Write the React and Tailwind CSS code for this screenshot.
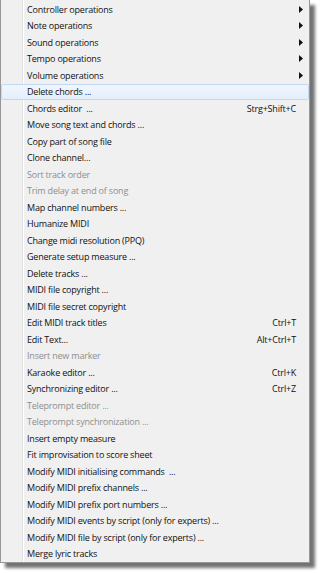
import React from 'react'

const items = [
  { label: 'Controller operations', sub: true },
  { label: 'Note operations', sub: true },
  { label: 'Sound operations', sub: true },
  { label: 'Tempo operations', sub: true },
  { label: 'Volume operations', sub: true },
  { label: 'Delete chords ...', active: true },
  { label: 'Chords editor  ...', key: 'Strg+Shift+C' },
  { label: 'Move song text and chords ...' },
  { label: 'Copy part of song file' },
  { label: 'Clone channel...' },
  { label: 'Sort track order', off: true },
  { label: 'Trim delay at end of song', off: true },
  { label: 'Map channel numbers ...' },
  { label: 'Humanize MIDI' },
  { label: 'Change midi resolution (PPQ)' },
  { label: 'Generate setup measure ...' },
  { label: 'Delete tracks ...' },
  { label: 'MIDI file copyright ...' },
  { label: 'MIDI file secret copyright' },
  { label: 'Edit MIDI track titles', key: 'Ctrl+T' },
  { label: 'Edit Text...', key: 'Alt+Ctrl+T' },
  { label: 'Insert new marker', off: true },
  { label: 'Karaoke editor ...', key: 'Ctrl+K' },
  { label: 'Synchronizing editor ...', key: 'Ctrl+Z' },
  { label: 'Teleprompt editor ...', off: true },
  { label: 'Teleprompt synchronization ...', off: true },
  { label: 'Insert empty measure' },
  { label: 'Fit improvisation to score sheet' },
  { label: 'Modify MIDI initialising commands  ...' },
  { label: 'Modify MIDI prefix channels ...' },
  { label: 'Modify MIDI prefix port numbers ...' },
  { label: 'Modify MIDI events by script (only for experts) ...' },
  { label: 'Modify MIDI file by script (only for experts) ...' },
  { label: 'Merge lyric tracks' },
]

function MenuRow({ label, sub, shortcut, off, active }) {
  return (
    <div
      className={`relative flex items-center h-[16.5px] whitespace-pre ${
        active
          ? 'rounded-[2px] border border-[#c3d9f3] bg-[linear-gradient(#f1f6fd,#e4eefb)] pl-[25px]'
          : 'pl-[26px]'
      } ${off ? 'text-[#8f8f8f]' : 'text-[#111]'}`}
    >
      <span className="flex-1">{label}</span>
      {shortcut && <span className="pr-[13px]">{shortcut}</span>}
      {sub && (
        <span className="w-[13px] flex items-center pl-[3px]">
          <svg width="4" height="7" viewBox="0 0 4 7">
            <path d="M0 0 L4 3.5 L0 7 Z" fill="#111" />
          </svg>
        </span>
      )}
    </div>
  )
}

export default function App() {
  return (
    <div className="w-[320px] h-[574px] bg-white overflow-hidden font-['Open_Sans',sans-serif] text-[9px] tracking-[-0.2px] leading-none">
      <div className="relative w-[310px] h-[563px] border border-t-0 border-[#979797] pt-[1px] bg-[#f0f0f0] shadow-[5px_5px_3px_rgba(0,0,0,0.55)]">
        {/* gutter divider */}
        <div className="absolute left-[21px] top-0 bottom-0 w-[2px] border-l border-[#e2e3e3] bg-white" />
        {items.map(it => (
          <MenuRow
            key={it.label}
            label={it.label}
            sub={it.sub}
            shortcut={it.key}
            off={it.off}
            active={it.active}
          />
        ))}
      </div>
    </div>
  )
}
